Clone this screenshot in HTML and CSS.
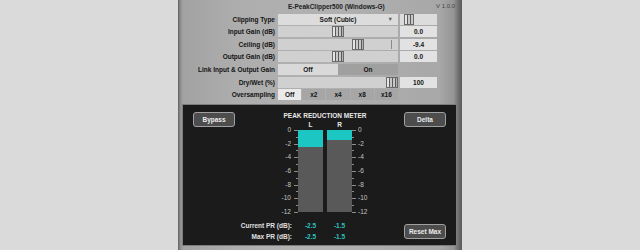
FILE: index.html
```html
<!DOCTYPE html>
<html lang="en">
<head>
    <meta charset="UTF-8">
    <meta name="viewport" content="width=device-width, initial-scale=1.0">
    <title>E-PeakClipper500</title>
    <link rel="stylesheet" href="styles.css">
</head>
<body>

<div class="plugin">
    <div class="top">
        <div class="titlebar">
            <span class="title">E-PeakClipper500 (Windows-G)</span>
            <span class="version">V 1.0.0</span>
        </div>

        <div class="controls">
            <label>Clipping Type</label>
            <div class="combo"><span>Soft (Cubic)</span><span class="arrow">&#9660;</span></div>
            <div class="slider value-slider"><span class="thumb" style="--pos: 0.1"></span></div>

            <label>Input Gain (dB)</label>
            <div class="slider"><span class="thumb" style="--pos: 0.5"></span></div>
            <div class="value">0.0</div>

            <label>Ceiling (dB)</label>
            <div class="slider"><span class="thumb" style="--pos: 0.687"></span><span class="mark"></span></div>
            <div class="value">-9.4</div>

            <label>Output Gain (dB)</label>
            <div class="slider"><span class="thumb" style="--pos: 0.5"></span></div>
            <div class="value">0.0</div>

            <label>Link Input &amp; Output Gain</label>
            <div class="toggle">
                <span class="opt light">Off</span>
                <span class="opt">On</span>
            </div>
            <div></div>

            <label>Dry/Wet (%)</label>
            <div class="slider"><span class="thumb" style="--pos: 1"></span></div>
            <div class="value">100</div>

            <label>Oversampling</label>
            <div class="segments">
                <span class="opt active">Off</span>
                <span class="opt">x2</span>
                <span class="opt">x4</span>
                <span class="opt">x8</span>
                <span class="opt">x16</span>
            </div>
            <div></div>
        </div>
    </div>

    <div class="meter-panel">
        <button class="btn bypass">Bypass</button>
        <div class="meter-title">PEAK REDUCTION METER</div>
        <button class="btn delta">Delta</button>

        <div class="ch ch-l">L</div>
        <div class="ch ch-r">R</div>

        <div class="scale scale-l">
            <span>0</span><span>-2</span><span>-4</span><span>-6</span><span>-8</span><span>-10</span><span>-12</span>
        </div>
        <div class="ticks ticks-l"></div>
        <div class="bar bar-l"><div class="fill" style="--db: 2.5"></div></div>
        <div class="bar bar-r"><div class="fill" style="--db: 1.5"></div></div>
        <div class="ticks ticks-r"></div>
        <div class="scale scale-r">
            <span>0</span><span>-2</span><span>-4</span><span>-6</span><span>-8</span><span>-10</span><span>-12</span>
        </div>

        <div class="read-label row-cur">Current PR (dB):</div>
        <div class="read-val col-l row-cur">-2.5</div>
        <div class="read-val col-r row-cur">-1.5</div>
        <div class="read-label row-max">Max PR (dB):</div>
        <div class="read-val col-l row-max">-2.5</div>
        <div class="read-val col-r row-max">-1.5</div>

        <button class="btn reset">Reset Max</button>
    </div>
</div>

</body>
</html>
```

FILE: styles.css
```css
body {
    margin: 0;
    background-color: #dadada;
    font-family: 'Liberation Sans', Arial, sans-serif;
    font-size: 6.5px;
    font-weight: bold;
    color: #141414;
}
.plugin {
    width: 284px;
    height: 250px;
    margin: 0 auto;
    background: linear-gradient(to right, #5e5e5e 0, #8a8a8a 2px, #a2a2a2 5px, #adadad 20%, #b1b1b1 50%, #a8a8a8 92%, #969696 97%, #6a6a6a 99%, #5a5a5a 100%);
    overflow: hidden;
}
.top {
    height: 104px;
}
.titlebar {
    height: 12.7px;
    display: flex;
    align-items: center;
    padding-left: 110px;
    padding-right: 7px;
    color: #222222;
}
.version {
    margin-left: auto;
    font-weight: normal;
    font-size: 6px;
    color: #474747;
}
.controls {
    display: grid;
    grid-template-columns: 100px 120px 39px;
    grid-auto-rows: 12.66px;
    align-items: center;
}
.controls label {
    text-align: right;
    padding-right: 3px;
    white-space: nowrap;
}
.combo {
    height: 11px;
    background-color: #dcdcdc;
    display: flex;
    align-items: center;
    justify-content: center;
    position: relative;
}
.combo .arrow {
    position: absolute;
    right: 5px;
    font-size: 5.5px;
    color: #5e5e5e;
}
.slider {
    position: relative;
    height: 11px;
    background-color: #d0d0d0;
}
.value-slider {
    margin-left: 2px;
    width: 37px;
    background-color: #dcdcdc;
}
.thumb {
    position: absolute;
    top: 0;
    left: calc(var(--pos) * (100% - 12px));
    width: 12px;
    height: 11px;
    box-sizing: border-box;
    border: 1px solid #6a6a6a;
    background: linear-gradient(to right, #e4e4e4 0 2px, #5a5a5a 2px 3px, #c8c8c8 3px 5px, #5a5a5a 5px 6px, #c8c8c8 6px 8px, #5a5a5a 8px 9px, #b0b0b0 9px);
}
.value-slider .thumb {
    left: 4px;
    width: 10px;
}
.mark {
    position: absolute;
    top: 1px;
    right: 6px;
    width: 1px;
    height: 9px;
    background-color: #8a8a8a;
}
.value {
    margin-left: 2px;
    width: 37px;
    height: 11px;
    background-color: #e2e2e2;
    display: flex;
    align-items: center;
    justify-content: center;
}
.toggle, .segments {
    display: flex;
    height: 11px;
}
.opt {
    flex: 1;
    display: flex;
    align-items: center;
    justify-content: center;
    background-color: #a0a0a0;
}
.opt.light {
    background-color: #d9d9d9;
}
.segments {
    gap: 1px;
}
.segments .opt {
    background-color: #a6a6a6;
}
.segments .opt.active {
    background-color: #eaeaea;
}
.meter-panel {
    margin: 0 5px 0 4px;
    height: 142px;
    box-sizing: border-box;
    border: 1px solid #7c7c7c;
    background-color: #1b1b1b;
    padding: 7px 10px 0 10px;
    display: grid;
    grid-template-columns: 42px 57px 6px 25px 4px 25px 5px 47px 42px;
    grid-template-rows: 8px 10px 82px 8px 11px 11px;
    color: #e8e8e8;
}
.btn {
    font: inherit;
    color: #ececec;
    background-color: #4d4d4d;
    border: 1px solid #a0a0a0;
    border-radius: 3px;
    height: 15px;
    padding: 0;
    align-self: start;
}
.bypass {
    grid-column: 1;
    grid-row: 1 / span 2;
}
.delta {
    grid-column: 9;
    grid-row: 1 / span 2;
}
.reset {
    grid-column: 9;
    grid-row: 5 / span 2;
    align-self: center;
}
.meter-title {
    grid-column: 2 / 9;
    grid-row: 1;
    padding-left: 11px;
    text-align: center;
    white-space: nowrap;
    line-height: 8px;
}
.ch {
    grid-row: 2;
    text-align: center;
    line-height: 10px;
}
.ch-l { grid-column: 4; }
.ch-r { grid-column: 6; }
.scale {
    grid-row: 3;
    margin: -4px 0;
    display: flex;
    flex-direction: column;
    justify-content: space-between;
    color: #c4c4c4;
    font-weight: normal;
}
.scale span {
    height: 8px;
    line-height: 8px;
}
.scale-l {
    grid-column: 2;
    text-align: right;
    padding-right: 1px;
}
.scale-r {
    grid-column: 8;
    padding-left: 1px;
}
.ticks {
    grid-row: 3;
    height: 83px;
}
.ticks-l {
    grid-column: 3;
    background:
        repeating-linear-gradient(#8c8c8c 0 1px, transparent 1px 13.667px) right top / 4px 100% no-repeat,
        repeating-linear-gradient(#8c8c8c 0 1px, transparent 1px 6.833px) right top / 2px 100% no-repeat;
}
.ticks-r {
    grid-column: 7;
    background:
        repeating-linear-gradient(#8c8c8c 0 1px, transparent 1px 13.667px) left top / 4px 100% no-repeat,
        repeating-linear-gradient(#8c8c8c 0 1px, transparent 1px 6.833px) left top / 2px 100% no-repeat;
}
.bar {
    grid-row: 3;
    background-color: #595959;
}
.bar-l { grid-column: 4; }
.bar-r { grid-column: 6; }
.fill {
    height: calc(var(--db) * 82px / 12);
    background-color: #1cc6c3;
}
.read-label {
    grid-column: 2;
    text-align: right;
    white-space: nowrap;
    line-height: 11px;
    color: #e0e0e0;
}
.read-val {
    text-align: center;
    line-height: 11px;
    color: #2cc2bd;
}
.col-l { grid-column: 4; }
.col-r { grid-column: 6; }
.row-cur { grid-row: 5; }
.row-max { grid-row: 6; }
```
